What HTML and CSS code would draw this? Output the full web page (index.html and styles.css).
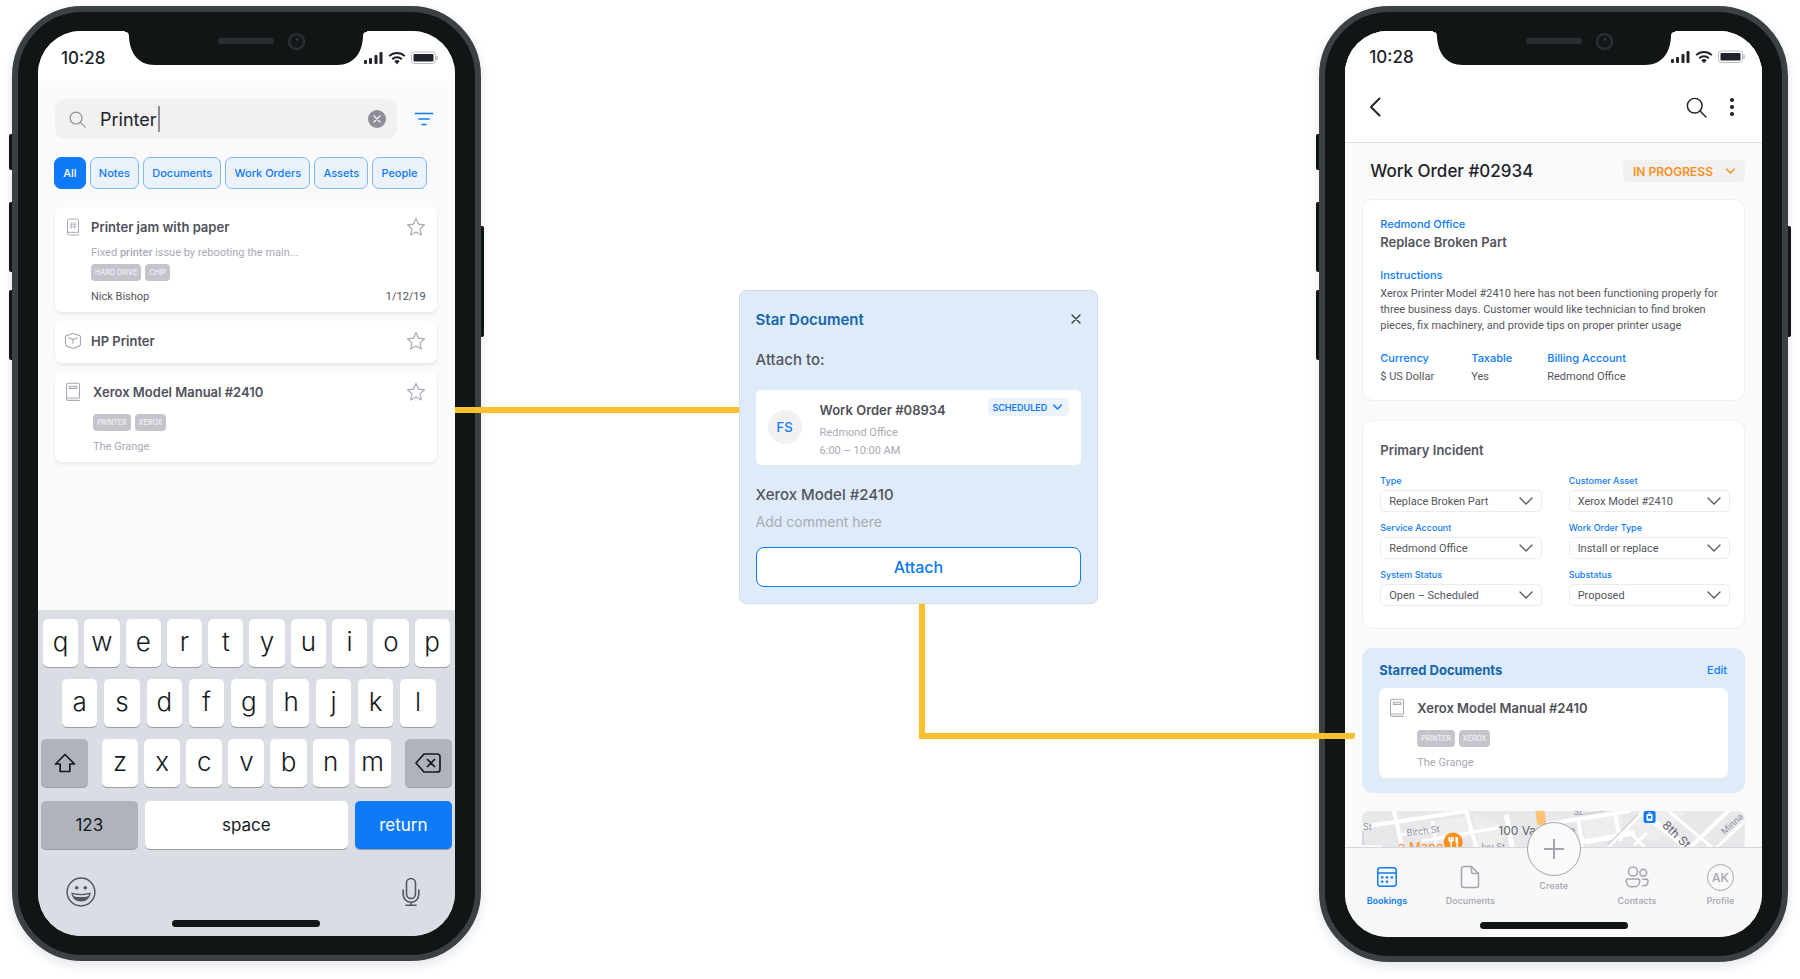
FILE: index.html
```html
<!DOCTYPE html>
<html lang="en">
<head>
<meta charset="utf-8">
<meta name="viewport" content="width=device-width, initial-scale=1">
<title>Star Document flow</title>
<link rel="stylesheet" href="styles.css">
</head>
<body>
<svg class="sprite" aria-hidden="true">
  <symbol id="i-notch" viewBox="0 0 242 34">
    <path d="M0 0h242v1c-3 0-4 1-4 5-1 16-9 28-26 28H30C13 34 5 22 4 6 4 2 3 1 0 1z" fill="#111516"/>
    <rect x="93" y="7" width="56" height="6" rx="3" fill="#2a2e31"/>
    <circle cx="171.500" cy="10.500" r="7.500" fill="#14181a" stroke="#2a2e31" stroke-width="2.500"/>
    <circle cx="172" cy="8.500" r="1.200" fill="#3a4044"/>
  </symbol>
  <symbol id="i-status" viewBox="0 0 74 14">
    <g fill="#20232b">
      <rect x="0" y="9" width="3" height="4" rx="1"/><rect x="5" y="7" width="3" height="6" rx="1"/>
      <rect x="10.500" y="4" width="3" height="9" rx="1"/><rect x="15.500" y="1" width="3" height="12" rx="1"/>
      <path d="M33 13.200l2.700-2.900a4 4 0 0 0-5.400 0z"/>
    </g>
    <path d="M25.200 5.100a11.200 11.200 0 0 1 15.600 0M28.200 8.200a7 7 0 0 1 9.600 0" fill="none" stroke="#20232b" stroke-width="2"/>
    <rect x="47.500" y="1" width="24" height="11.500" rx="3" fill="none" stroke="#b9b9c3"/>
    <path d="M73 5v4" stroke="#b9b9c3" stroke-width="1.500"/>
    <rect x="49.500" y="3" width="20" height="7.500" rx="1" fill="#20232b"/>
  </symbol>
  <symbol id="i-search" viewBox="0 0 20 20">
    <g fill="none" stroke="currentColor" stroke-width="1.400" stroke-linecap="round"><circle cx="8.300" cy="8.300" r="7"/><path d="M13.400 13.400l5.600 5.600"/></g>
  </symbol>
  <symbol id="i-clear" viewBox="0 0 18 18">
    <circle cx="9" cy="9" r="9" fill="#8e8e98"/><path d="M6 6l6 6M12 6l-6 6" stroke="#f2f1f0" stroke-width="1.400" stroke-linecap="round"/>
  </symbol>
  <symbol id="i-filter" viewBox="0 0 20 14">
    <path d="M1.500 1.500h17M5 7h10M8 12.500h4" stroke="#0d7bf8" stroke-width="1.700" stroke-linecap="round"/>
  </symbol>
  <symbol id="i-star" viewBox="0 0 20 20">
    <path d="M10 1.500l2.500 5.600 6 .7-4.500 4.100 1.300 6.100L10 15l-5.300 3 1.300-6.100L1.500 7.800l6-.7z" fill="none" stroke="#a9a9b5" stroke-width="1.200" stroke-linejoin="round"/>
  </symbol>
  <symbol id="i-note" viewBox="0 0 14 18">
    <g fill="none" stroke="#a9a9b5" stroke-linecap="round"><path d="M12.500 13.500V3a2 2 0 0 0-2-2h-7a2 2 0 0 0-2 2v12a2 2 0 0 0 2 2h9M1.800 14.300h10.700"/><path d="M6 4.200l-.7 6.300M9 4.200l-.7 6.300M4 6.200h6.300M3.700 8.700H10" stroke-width=".8"/></g>
  </symbol>
  <symbol id="i-doc" viewBox="0 0 16 20">
    <path d="M14.500 15.500V3a1.700 1.700 0 0 0-1.700-1.700H3.200A1.700 1.700 0 0 0 1.500 3v13.700a1.700 1.700 0 0 0 1.700 1.700h11M1.800 16h12.500M4.500 4.200h7.300v2.200H4.500z" fill="none" stroke="#a9a9b5" stroke-width="1.100" stroke-linecap="round"/>
  </symbol>
  <symbol id="i-asset" viewBox="0 0 18 18">
    <path d="M9 1.500l6.200 1.800q1.300.5 1.300 1.800v7q0 1.500-1.300 2L9 16.500l-6.200-2.400q-1.300-.5-1.300-2v-7q0-1.300 1.300-1.800zM4.800 5.700L9 7.700l4.200-2M9 7.700v3.500" fill="none" stroke="#a9a9b5" stroke-width="1.200" stroke-linecap="round" stroke-linejoin="round"/>
  </symbol>
  <symbol id="i-shift" viewBox="0 0 22 20">
    <path d="M11 1.500l9.500 9.500h-4.700v7.500H6.200V11H1.500z" fill="none" stroke="#15191c" stroke-width="1.700" stroke-linejoin="round"/>
  </symbol>
  <symbol id="i-delete" viewBox="0 0 26 20">
    <path d="M9 1h13.500A2.500 2.500 0 0 1 25 3.500v13a2.500 2.500 0 0 1-2.500 2.500H9l-8-9z M12.500 6.500l7 7M19.500 6.500l-7 7" fill="none" stroke="#15191c" stroke-width="1.700" stroke-linejoin="round" stroke-linecap="round"/>
  </symbol>
  <symbol id="i-emoji" viewBox="0 0 30 30">
    <circle cx="15" cy="15" r="13.900" fill="none" stroke="#55575d" stroke-width="1.500"/>
    <circle cx="10.700" cy="10.700" r="1.800" fill="#55575d"/><circle cx="19.300" cy="10.700" r="1.800" fill="#55575d"/>
    <path d="M5.200 15.500q9.800 2.800 19.600 0Q24 24.500 15 24.500T5.200 15.500z" fill="#55575d"/>
    <path d="M6.700 17.200q8.300 2 16.600 0l-1 2q-7.300 1.700-14.600 0z" fill="#dadde4"/>
  </symbol>
  <symbol id="i-mic" viewBox="0 0 18 30">
    <g fill="none" stroke="#55575d" stroke-width="1.600" stroke-linecap="round"><rect x="4.500" y="1.500" width="9" height="20" rx="4.500"/><path d="M1.200 13v4.500a7.800 7.800 0 0 0 15.600 0V13M9 25.500V28M4 28.300h10"/></g>
  </symbol>
  <symbol id="i-close" viewBox="0 0 10 10"><path d="M1 1l8 8M9 1L1 9" stroke="#33363c" stroke-width="1.300" stroke-linecap="round"/></symbol>
  <symbol id="i-chev" viewBox="0 0 14 8"><path d="M1 1l6 6 6-6" fill="none" stroke="currentColor" stroke-linecap="round" stroke-linejoin="round" vector-effect="non-scaling-stroke"/></symbol>
  <symbol id="i-back" viewBox="0 0 12 20"><path d="M10.500 1.500L2 10l8.500 8.500" fill="none" stroke="#20232b" stroke-width="2" stroke-linecap="round" stroke-linejoin="round"/></symbol>
  <symbol id="i-more" viewBox="0 0 6 20"><g fill="#20232b"><circle cx="3" cy="3" r="2.100"/><circle cx="3" cy="10" r="2.100"/><circle cx="3" cy="17" r="2.100"/></g></symbol>
  <symbol id="i-cal" viewBox="0 0 20 20">
    <path d="M.8 6h18.400M3 .8h14a2.200 2.200 0 0 1 2.200 2.200v14a2.200 2.200 0 0 1-2.200 2.200H3A2.200 2.200 0 0 1 .8 17V3A2.200 2.200 0 0 1 3 .8z" fill="none" stroke="#0d7bf8" stroke-width="1.500"/>
    <g fill="#0d7bf8"><rect x="4" y="9.200" width="2.400" height="2.400" rx=".6"/><rect x="8.800" y="9.200" width="2.400" height="2.400" rx=".6"/><rect x="13.600" y="9.200" width="2.400" height="2.400" rx=".6"/><rect x="4" y="13.400" width="2.400" height="2.400" rx=".6"/><rect x="8.800" y="13.400" width="2.400" height="2.400" rx=".6"/></g>
  </symbol>
  <symbol id="i-file" viewBox="0 0 20 24"><path d="M11.500 1.500H3.500A2 2 0 0 0 1.500 3.500v17a2 2 0 0 0 2 2h13a2 2 0 0 0 2-2V8.500zM11.500 1.500v5a2 2 0 0 0 2 2h5" fill="none" stroke="#a3a4b0" stroke-width="1.500" stroke-linejoin="round"/></symbol>
  <symbol id="i-people" viewBox="0 0 24 24"><g fill="none" stroke="#a3a4b0" stroke-width="1.500"><circle cx="8" cy="6.500" r="4.600"/><circle cx="18.300" cy="7.700" r="3.400"/><path d="M3 14h10a1.800 1.800 0 0 1 1.800 1.800c0 3.500-2.200 6-5 6H6.200c-2.800 0-5-2.500-5-6A1.800 1.800 0 0 1 3 14zM17.200 14.300h4.300a1.500 1.500 0 0 1 1.500 1.500c0 2.700-1.500 4.900-3.900 4.900h-1.900"/></g></symbol>
</svg>

<main class="stage">
  <section class="phone phone-search" aria-label="Search">
    <span class="side side-mute"></span><span class="side side-up"></span><span class="side side-down"></span><span class="side side-power"></span>
    <div class="screen">
      <svg class="notch" width="242" height="34" aria-hidden="true"><use href="#i-notch"/></svg>
      <header class="status"><span>10:28</span><svg width="74" height="14" aria-hidden="true"><use href="#i-status"/></svg></header>

      <div class="search-row">
        <div class="search">
          <svg width="17" height="17" aria-hidden="true"><use href="#i-search"/></svg>
          <input class="search-input" type="text" value="Printer" aria-label="Search"><span class="caret"></span>
          <button class="plain" aria-label="Clear"><svg width="18" height="18"><use href="#i-clear"/></svg></button>
        </div>
        <button class="plain" aria-label="Filter"><svg width="20" height="14"><use href="#i-filter"/></svg></button>
      </div>

      <nav class="chips">
        <button class="chip chip-on">All</button><button class="chip">Notes</button><button class="chip">Documents</button><button class="chip">Work Orders</button><button class="chip">Assets</button><button class="chip">People</button>
      </nav>

      <div class="results">
        <article class="card">
          <div class="card-head"><span class="card-icon"><svg width="14" height="18"><use href="#i-note"/></svg></span><h3>Printer jam with paper</h3><button class="plain" aria-label="Star"><svg width="20" height="20"><use href="#i-star"/></svg></button></div>
          <div class="card-body">
            <p class="muted excerpt">Fixed <b>printer</b> issue by rebooting the main...</p>
            <div class="tags"><span>HARD DRIVE</span><span>CHIP</span></div>
            <p class="byline"><span>Nick Bishop</span><time>1/12/19</time></p>
          </div>
        </article>
        <article class="card card-short">
          <div class="card-head"><span class="card-icon"><svg width="18" height="18"><use href="#i-asset"/></svg></span><h3>HP Printer</h3><button class="plain" aria-label="Star"><svg width="20" height="20"><use href="#i-star"/></svg></button></div>
        </article>
        <article class="card card-doc">
          <div class="card-head"><span class="card-icon"><svg width="16" height="20"><use href="#i-doc"/></svg></span><h3>Xerox Model Manual #2410</h3><button class="plain" aria-label="Star"><svg width="20" height="20"><use href="#i-star"/></svg></button></div>
          <div class="card-body">
            <div class="tags"><span>PRINTER</span><span>XEROX</span></div>
            <p class="muted place">The Grange</p>
          </div>
        </article>
      </div>

      <div class="keyboard">
        <div class="keys"><button>q</button><button>w</button><button>e</button><button>r</button><button>t</button><button>y</button><button>u</button><button>i</button><button>o</button><button>p</button></div>
        <div class="keys keys-home"><button>a</button><button>s</button><button>d</button><button>f</button><button>g</button><button>h</button><button>j</button><button>k</button><button>l</button></div>
        <div class="keys keys-low">
          <button class="dark" aria-label="Shift"><svg width="22" height="20"><use href="#i-shift"/></svg></button>
          <div class="letters"><button>z</button><button>x</button><button>c</button><button>v</button><button>b</button><button>n</button><button>m</button></div>
          <button class="dark" aria-label="Delete"><svg width="26" height="20"><use href="#i-delete"/></svg></button>
        </div>
        <div class="keys keys-wide"><button class="dark">123</button><button class="space">space</button><button class="return">return</button></div>
        <div class="key-foot"><button class="plain" aria-label="Emoji"><svg width="30" height="30"><use href="#i-emoji"/></svg></button><button class="plain" aria-label="Dictate"><svg width="18" height="30"><use href="#i-mic"/></svg></button></div>
        <div class="home"></div>
      </div>
    </div>
  </section>

  <span class="link-in"></span>

  <section class="dialog" aria-label="Star Document">
    <header><h2>Star Document</h2><button class="plain" aria-label="Close"><svg width="10" height="10"><use href="#i-close"/></svg></button></header>
    <h4 class="attach-to">Attach to:</h4>
    <div class="order">
      <span class="avatar">FS</span>
      <div class="order-text"><h3>Work Order #08934</h3><p class="muted">Redmond Office</p><p class="muted">6:00 – 10:00 AM</p></div>
      <div class="pick pick-blue"><select aria-label="Order status"><option>SCHEDULED</option></select><svg width="9" height="6"><use href="#i-chev"/></svg></div>
    </div>
    <h4><label for="comment">Xerox Model #2410</label></h4>
    <input id="comment" class="comment" type="text" placeholder="Add comment here">
    <button class="attach">Attach</button>
  </section>

  <span class="link-out"></span>

  <section class="phone phone-order" aria-label="Work order">
    <span class="side side-mute"></span><span class="side side-up"></span><span class="side side-down"></span><span class="side side-power"></span>
    <div class="screen">
      <svg class="notch" width="242" height="34" aria-hidden="true"><use href="#i-notch"/></svg>
      <div class="top">
        <header class="status"><span>10:28</span><svg width="74" height="14" aria-hidden="true"><use href="#i-status"/></svg></header>
        <div class="toolbar">
          <button class="plain" aria-label="Back"><svg width="12" height="20"><use href="#i-back"/></svg></button>
          <button class="plain find" aria-label="Search"><svg width="21" height="21"><use href="#i-search"/></svg></button>
          <button class="plain" aria-label="More"><svg width="6" height="20"><use href="#i-more"/></svg></button>
        </div>
      </div>

      <div class="order-view">
        <div class="heading"><h1>Work Order #02934</h1>
          <div class="pick pick-orange"><select aria-label="Status"><option>IN PROGRESS</option></select><svg width="9" height="6"><use href="#i-chev"/></svg></div>
        </div>

        <section class="panel">
          <a class="label" href="#office">Redmond Office</a>
          <h3 class="part">Replace Broken Part</h3>
          <h5 class="label">Instructions</h5>
          <p class="copy">Xerox Printer Model #2410 here has not been functioning properly for three business days. Customer would like technician to find broken pieces, fix machinery, and provide tips on proper printer usage</p>
          <dl class="facts">
            <div><dt class="label">Currency</dt><dd>$ US Dollar</dd></div>
            <div><dt class="label">Taxable</dt><dd>Yes</dd></div>
            <div><dt class="label">Billing Account</dt><dd>Redmond Office</dd></div>
          </dl>
        </section>

        <section class="panel incident">
          <h3>Primary Incident</h3>
          <div class="fields">
            <div class="field"><label for="f1">Type</label><div class="drop"><select id="f1"><option>Replace Broken Part</option></select><svg width="14" height="8"><use href="#i-chev"/></svg></div></div>
            <div class="field"><label for="f2">Customer Asset</label><div class="drop"><select id="f2"><option>Xerox Model #2410</option></select><svg width="14" height="8"><use href="#i-chev"/></svg></div></div>
            <div class="field"><label for="f3">Service Account</label><div class="drop"><select id="f3"><option>Redmond Office</option></select><svg width="14" height="8"><use href="#i-chev"/></svg></div></div>
            <div class="field"><label for="f4">Work Order Type</label><div class="drop"><select id="f4"><option>Install or replace</option></select><svg width="14" height="8"><use href="#i-chev"/></svg></div></div>
            <div class="field"><label for="f5">System Status</label><div class="drop"><select id="f5"><option>Open – Scheduled</option></select><svg width="14" height="8"><use href="#i-chev"/></svg></div></div>
            <div class="field"><label for="f6">Substatus</label><div class="drop"><select id="f6"><option>Proposed</option></select><svg width="14" height="8"><use href="#i-chev"/></svg></div></div>
          </div>
        </section>

        <section class="starred">
          <header><h3>Starred Documents</h3><a href="#edit">Edit</a></header>
          <article class="card card-doc">
            <div class="card-head"><span class="card-icon"><svg width="16" height="20"><use href="#i-doc"/></svg></span><h3>Xerox Model Manual #2410</h3></div>
            <div class="card-body"><div class="tags"><span>PRINTER</span><span>XEROX</span></div><p class="muted place">The Grange</p></div>
          </article>
        </section>

        <svg class="map" viewBox="0 0 382 36" preserveAspectRatio="xMidYMin slice" role="img" aria-label="Map">
          <rect width="382" height="36" fill="#e8e8eb"/>
          <path d="M70 10l36-5 5 20-38 6zM112 4l28 10v22h-24zM220 6l40-6v26l-36 5zM262 24l22-24h40l-30 30z" fill="#f0eeec"/>
          <g fill="none" stroke="#fff" stroke-width="4">
            <path d="M0 16l105-16M104 0l10 36M32 0l8 36M178 14l90-14M216 8l4 28M252 0l6 30M328 36l48-46"/>
            <path d="M222 31l50-9M144 4l6 32M278 0l50 40" stroke-width="5"/>
            <path d="M70 10l4 26M38 24l34-5M60 30l80-14M182 36l40-8M242 40l42-42M264 18l18 18M272 34l12-12M306 0l50 42M350 40l32-30M0 36l20 0" stroke-width="3"/>
          </g>
          <path d="M245 34l30-30M1 20v14M216 4l26-4" fill="none" stroke="#c7c8d0"/>
          <path d="M173 0h9l2 14h-9z" fill="#fdc274"/>
          <g class="map-small">
            <text x="1" y="19">St</text><text x="45" y="25" transform="rotate(-7 45 25)">Birch St</text><text x="119" y="39">Ivy St</text><text x="211" y="24" transform="rotate(-70 211 24)">G</text><text x="211" y="4">St</text>
            <text x="362" y="24" transform="rotate(-43 362 24)">Minna</text>
          </g>
          <g class="map-big"><text x="136" y="24">100 Van</text><text x="299" y="15" transform="rotate(44 299 15)">8th St</text></g>
          <text class="map-place" x="36" y="41">a Mano</text>
          <circle cx="91" cy="31" r="9.500" fill="#f8901e"/>
          <path d="M87 26v4M89 26v4M91 26v4M87 30h4M89 30v7M95 26v11M94 26v5h2" stroke="#fff" stroke-width="1.500" fill="none"/>
          <rect x="281" y="0" width="12" height="12" rx="2" fill="#0d7bf8"/><rect x="284" y="3" width="6" height="7" rx="1" fill="#fff"/><rect x="285.500" y="5" width="3" height="2.500" fill="#0d7bf8"/><path d="M285.500 2h3" stroke="#fff"/>
        </svg>
      </div>

      <nav class="tabs">
        <a class="tab tab-on" href="#bookings"><svg width="20" height="20"><use href="#i-cal"/></svg>Bookings</a>
        <a class="tab" href="#documents"><svg width="20" height="24"><use href="#i-file"/></svg>Documents</a>
        <a class="tab tab-create" href="#create"><span class="plus"><svg width="20" height="20" viewBox="0 0 20 20"><path d="M10 0v20M0 10h20" stroke="#a3a4b0" stroke-width="2"/></svg></span>Create</a>
        <a class="tab" href="#contacts"><svg width="24" height="24"><use href="#i-people"/></svg>Contacts</a>
        <a class="tab" href="#profile"><span class="initials">AK</span>Profile</a>
        <div class="home"></div>
      </nav>
    </div>
  </section>
</main>
</body>
</html>
```

FILE: styles.css
```css
* { box-sizing: border-box; }
body { margin: 0; background: #fff; color: #55555e; font-family: Inter, "Liberation Sans", sans-serif; font-size: 12px; }
h1, h2, h3, h4, h5, p, dl, dd { margin: 0; }
a { text-decoration: none; }
button, input, select { font: inherit; color: inherit; margin: 0; }
svg { display: block; flex: none; }
.sprite { position: absolute; width: 0; height: 0; }
.plain { display: block; padding: 0; border: 0; background: none; flex: none; }

.stage { display: grid; grid-template-columns: 469fr 258fr 360fr 221fr 469fr; grid-template-rows: auto; align-items: start; padding: 6px 12px 18px; }

/* Phone frame */
.phone { grid-row: 1; position: relative; min-width: 0; padding: 19px 20px; border: 6px solid #3a4145; border-radius: 70px; background: #111516; box-shadow: 0 4px 10px 2px #e9eaee; }
.phone-search { grid-column: 1; }
.phone-order { grid-column: 5; }
.side { position: absolute; left: -9px; width: 3px; border-radius: 2px 0 0 2px; background: #111516; }
.side-mute { top: 122px; height: 36px; }
.side-up { top: 190px; height: 70px; }
.side-down { top: 278px; height: 70px; }
.side-power { top: 214px; left: auto; right: -9px; height: 111px; border-radius: 0 2px 2px 0; }
.screen { position: relative; display: flex; flex-direction: column; min-height: 905px; overflow: hidden; border-radius: 43px; background: #fafafa; }
.notch { position: absolute; top: 0; left: 50%; margin-left: -121px; }
.status { display: flex; align-items: center; justify-content: space-between; height: 50px; padding: 4px 17px 0 23px; background: #fff; color: #20232b; font-size: 17px; font-weight: 500; }
.home { height: 7px; width: 148px; margin: 0 auto; border-radius: 4px; background: #111516; }

/* Search */
.search-row { display: flex; align-items: center; gap: 17px; padding: 18px 21px 0 17px; }
.search { flex: 1; display: flex; align-items: center; height: 40px; padding: 0 11px 0 14px; border-radius: 10px; background: #f2f1f0; color: #8e8e98; }
.search-input { width: 58px; margin-left: 14px; padding: 0; border: 0; background: none; color: #20232b; font-size: 18px; outline: 0; }
.caret { width: 2px; height: 26px; margin-right: auto; background: #8e8e98; }
.chips { display: flex; gap: 4px; padding: 18px 28px 18px 16px; }
.chip { flex: 1 1 auto; height: 32px; padding: 0 8px; border: 1px solid #7db8f8; border-radius: 7px; background: #ecf2f9; color: #0d7bf8; font-size: 11px; font-weight: 500; white-space: nowrap; }
.chip-on { border-color: #0d7bf8; background: #0d7bf8; color: #fff; }

.results { display: flex; flex-direction: column; gap: 9px; padding: 0 18px 0 17px; }
.card { padding: 8px 11px 6px 7px; border-radius: 7px; background: #fff; box-shadow: 0 2px 3px #e9e9ec; }
.card-short { padding-bottom: 10px; }
.card-head { display: flex; align-items: center; height: 24px; }
.card-icon { display: flex; justify-content: center; width: 22px; margin-right: 7px; }
.card h3, .order h3 { flex: 1; font-size: 13px; font-weight: 600; color: #50505a; white-space: nowrap; }
.card-body { padding-left: 29px; }
.card-doc .card-icon { margin-right: 9px; }
.card-doc .card-body { padding: 8px 0 0 31px; }
.muted, .byline, .copy, .facts dd, .drop select { font-family: Roboto, Inter, sans-serif; font-size: 11px; }
.muted { color: #a9a9b5; line-height: 18px; }
.muted b { font-weight: 500; }
.excerpt { padding-top: 5px; }
.tags { display: flex; gap: 4px; padding: 2px 0 1px; }
.tags span { height: 17px; padding: 0 4px; border-radius: 4px; background: #c4c4cd; color: #f2f2f5; font-size: 7px; line-height: 17px; font-weight: 500; }
.byline { display: flex; justify-content: space-between; padding-top: 6px; line-height: 18px; }
.place { padding-top: 6px; }

/* Keyboard */
.keyboard { margin-top: auto; padding: 9px 3px 9px; background: #dadde4; }
.keys, .letters { display: flex; gap: 6px; }
.keys { padding: 0 2px; margin-bottom: 12px; }
.keys button { flex: 1; display: flex; align-items: center; justify-content: center; min-width: 0; height: 48px; padding: 0 0 3px; border: 0; border-radius: 5px; background: #fff; color: #15191c; font-size: 26px; font-weight: 300; box-shadow: 0 1px 0 #9b9da3; }
.keys-home { gap: 7px; padding: 0 16px 0 21px; }
.keys-low { gap: 14px; padding: 0; margin-bottom: 14px; }
.letters { flex: 1; }
.keys-low > .dark { flex: 0 0 47px; }
.keys .dark { background: #b0b3bc; padding: 0; }
.keys-wide { gap: 7px; padding: 0; margin-bottom: 28px; }
.keys-wide button { flex: 97; padding: 0; font-size: 17px; font-weight: 400; }
.keys .space { flex: 204; }
.keys .return { background: #0d7bf8; color: #fff; }
.key-foot { display: flex; justify-content: space-between; padding: 0 32px 0 25px; margin-bottom: 13px; }

/* Connectors */
.link-in { grid-row: 1; grid-column: 2; z-index: 1; height: 6px; margin: 401px 0 0 -26px; background: #fbc02d; }
.link-out { grid-row: 1; grid-column: 3 / 5; z-index: 1; height: 136px; margin: 597px -36px 0 31%; border: solid #fbc02d; border-width: 0 0 6px 6px; border-radius: 0 0 3px 0; }

/* Dialog */
.dialog { grid-row: 1; grid-column: 3; z-index: 2; margin-top: 284px; padding: 17px 16px 16px; border: 1px solid #d3dbe3; border-radius: 7px; background: #deebf8; }
.dialog header { display: flex; align-items: center; justify-content: space-between; height: 22px; }
.dialog h2 { font-size: 15px; font-weight: 600; color: #1766ab; }
.dialog h4 { font-size: 15px; line-height: 22px; font-weight: 500; }
.dialog .attach-to { padding: 19px 0; }
.order { display: flex; align-items: flex-start; height: 75px; margin-bottom: 19px; padding: 8px 12px; border-radius: 5px; background: #fff; }
.avatar { flex: none; width: 34px; height: 34px; margin: 12px 18px 0 0; border-radius: 50%; background: #f2f1f0; color: #0d7bf8; font-size: 13px; line-height: 34px; font-weight: 500; text-align: center; }
.order-text { flex: 1; }
.order-text h3 { line-height: 24px; margin-bottom: 2px; }
.pick { display: grid; grid-template-columns: 1fr auto; align-items: center; border-radius: 5px; }
.pick select { grid-area: 1 / 1 / 2 / 3; padding: 0; border: 0; background: none; appearance: none; outline: 0; }
.pick svg { grid-area: 1 / 2; pointer-events: none; stroke-width: 1.5; }
.pick-blue { width: 81px; height: 18px; padding: 0 7px 0 4px; background: #ecf2f9; color: #0d7bf8; font-size: 9px; font-weight: 600; }
.comment { display: block; width: 100%; height: 22px; margin: 4px 0 15px; padding: 0; border: 0; background: none; font-size: 14px; outline: 0; }
.comment::placeholder { color: #a9a9b5; opacity: 1; }
.attach { display: block; width: 100%; height: 40px; border: 1px solid #0d7bf8; border-radius: 8px; background: #fff; color: #0d7bf8; font-size: 16px; font-weight: 500; }

/* Work order */
.top { height: 112px; border-bottom: 1px solid #dcdce6; background: #fff; }
.phone-order .status { padding-top: 2px; }
.phone-order .status, .toolbar { padding-left: 24px; }
.toolbar { display: flex; align-items: center; height: 52px; padding-right: 27px; }
.find { margin: 0 22px 0 auto; color: #20232b; }
.order-view { flex: 1; display: flex; flex-direction: column; padding: 17px 17px 0; }
.heading { display: flex; align-items: center; justify-content: space-between; height: 22px; margin-bottom: 17px; padding-left: 8px; }
.heading h1 { font-size: 17px; font-weight: 500; color: #20232b; }
.pick-orange { width: 122px; height: 22px; padding: 0 10px; background: #f2f1f0; color: #f8901e; font-size: 12px; font-weight: 600; }
.label { display: block; color: #0d7bf8; font-size: 11px; line-height: 16px; font-weight: 500; }
.panel { margin: 0 0 19px; padding: 16px 17px 15px; border: 1px solid #f0f0f2; border-radius: 11px; background: #fff; }
.panel h3, .starred h3 { font-size: 13px; line-height: 20px; font-weight: 600; }
.part { margin-bottom: 15px; }
.copy { margin: 3px 0 16px; line-height: 16px; }
.facts { display: grid; grid-template-columns: 91px 76px 1fr; }
.facts dd { padding-top: 3px; line-height: 16px; }
.incident { padding: 19px 14px 22px 17px; }
.fields { display: grid; grid-template-columns: 1fr 1fr; gap: 10px 27px; padding-top: 15px; }
.field label { display: block; height: 15px; color: #0d7bf8; font-size: 9px; line-height: 12px; font-weight: 500; }
.drop { display: grid; grid-template-columns: 1fr auto; align-items: center; height: 22px; padding: 0 8px; border: 1px solid #ececef; border-radius: 5px; }
.drop select { grid-area: 1 / 1 / 2 / 3; padding: 0; border: 0; background: none; appearance: none; outline: 0; }
.drop svg { grid-area: 1 / 2; pointer-events: none; stroke-width: 1.3; }
.starred { padding: 12px 17px 15px; border-radius: 11px; background: #deebf8; }
.starred header { display: flex; justify-content: space-between; align-items: center; height: 20px; margin-bottom: 8px; }
.starred header h3 { color: #1766ab; font-weight: 700; }
.starred header a { padding-right: 1px; color: #0d7bf8; font-size: 11px; font-weight: 500; }
.map { width: 100%; height: 36px; margin-top: 18px; border-radius: 7px 7px 0 0; }
.map-small { fill: #8e909c; font-size: 9px; }
.map-big { fill: #63656f; font-size: 12px; }
.map-place { fill: #f8901e; font-size: 13px; }

/* Tab bar */
.tabs { position: relative; display: grid; grid-template-columns: repeat(5, 1fr); grid-template-rows: 74px auto; height: 90px; border-top: 1px solid #d5d5dd; background: #f8f8f8; }
.tab { display: grid; grid-template-rows: 28px 14px; row-gap: 3px; align-content: start; place-items: center; padding-top: 15px; color: #a3a4b0; font-size: 9px; line-height: 14px; font-weight: 500; }
.tab-on { color: #0d7bf8; font-weight: 600; }
.tab-create { grid-template-rows: 54px 14px; margin-top: -26px; padding: 0; }
.plus { display: grid; place-items: center; width: 54px; height: 54px; border: 1px solid #a3a4b0; border-radius: 50%; background: #fafafa; }
.initials { width: 27px; height: 27px; border: 1px solid #a3a4b0; border-radius: 50%; font-size: 12px; line-height: 25px; text-align: center; }
.tabs .home { grid-column: 1 / -1; }
```
